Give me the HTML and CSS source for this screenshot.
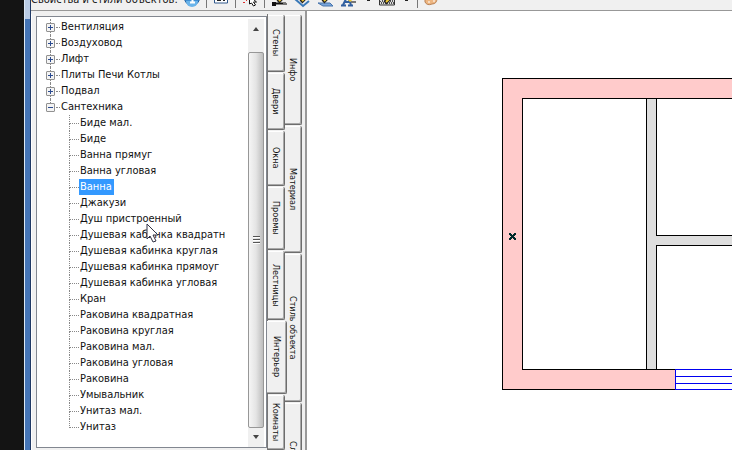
FILE: index.html
```
<!DOCTYPE html>
<html lang="ru">
<head>
<meta charset="utf-8">
<title>Свойства и стили объектов</title>
<link rel="stylesheet" href="styles.css">
</head>
<body>
<div class="desktop"></div>
<div class="frame"></div>
<div class="window">
  <header class="toolbar">
    <span class="title">Свойства и стили объектов:</span>
    <button class="tool" aria-label="Справка"><svg width="16" height="10" viewBox="0 0 16 10"><circle cx="8" cy="-2" r="7.500" fill="#3f8fd3" stroke="#24619f"/><path d="M2 1a6 6 0 0 0 12 0" fill="#6ab4ea"/><path d="M6 2.500h5M8.500 0v2" stroke="#fff" stroke-width="2"/></svg></button>
    <i class="sep"></i>
    <button class="tool" aria-label="Вид"><svg width="16" height="10" viewBox="0 0 16 10"><path d="M1.500-2v5h13v-5" fill="#fff" stroke="#31588c"/><path d="M4 .5h4M10 .5h2" stroke="#222"/></svg></button>
    <i class="sep"></i>
    <button class="tool" aria-label="Выбор"><svg width="16" height="10" viewBox="0 0 16 10"><path d="M1 2.500h2M4 .5h1" stroke="#d33"/><path d="M7.500-4v8l2-1 2 3 2-1-2-3h3z" fill="#fff" stroke="#111"/></svg></button>
    <i class="sep"></i>
    <div class="group">
      <button class="tool" aria-label="Стена"><svg width="18" height="10" viewBox="0 0 18 10"><path d="M3 3.500h12" stroke="#111" stroke-width="2"/><path d="M1 2h4v4H1z" fill="#111"/><path d="M12 4h4" stroke="#777" stroke-width="2"/><path d="M7 2l5-5" stroke="#222" stroke-width="4"/><path d="M8 1l4-4" stroke="#edc62e" stroke-width="2"/></svg></button>
      <button class="tool" aria-label="Линия"><svg width="18" height="10" viewBox="0 0 18 10"><path d="M1-1l8 7 6-5" fill="none" stroke="#3979b8" stroke-width="2"/><path d="M7 2l5-5" stroke="#222" stroke-width="4"/><path d="M8 1l4-4" stroke="#edc62e" stroke-width="2"/></svg></button>
      <button class="tool" aria-label="Плоскость"><svg width="18" height="10" viewBox="0 0 18 10"><path d="M1 3h12l3 3H6z" fill="#7ba6db" stroke="#4774ac"/><path d="M6 2l5-5" stroke="#222" stroke-width="4"/><path d="M7 1l4-4" stroke="#edc62e" stroke-width="2"/></svg></button>
      <button class="tool" aria-label="Текст"><svg width="18" height="10" viewBox="0 0 18 10"><path d="M1 5.500h5M8 5.500h5M3 5l4-8M8-3l3 8M5 2h5" fill="none" stroke="#315f9f" stroke-width="2"/><path d="M11 2h5" stroke="#777" stroke-width="2"/><path d="M9 1l4-4" stroke="#edc62e" stroke-width="3"/></svg></button>
    </div>
    <i class="more"></i>
    <button class="tool" aria-label="Штриховка"><svg width="17" height="10" viewBox="0 0 17 10"><path d="M.5-2v7h15v-7" fill="#ddd" stroke="#333"/><path d="M1 1.500h14M2 3.500h13" stroke="#555" stroke-dasharray="1 1"/><path d="M1 2.500h14M2 .5h13" stroke="#555" stroke-dasharray="1 1" stroke-dashoffset="1"/><path d="M6 3l6-6" stroke="#222" stroke-width="4"/><path d="M7 2l5-5" stroke="#edc62e" stroke-width="2"/></svg></button>
    <i class="more"></i>
    <i class="sep"></i>
    <button class="tool" aria-label="Палитра"><svg width="16" height="10" viewBox="0 0 16 10"><path d="M1-2v4q2 4 7 2q5 0 5-6" fill="#edb580" stroke="#b88155"/><path d="M4 2h2M9 1h2" stroke="#fff"/></svg></button>
  </header>
  <div class="body">
    <aside class="panel">
      <div class="content">
        <div class="treebox">
          <ul class="tree">
            <li><button class="toggle" aria-label="Развернуть"></button><span>Вентиляция</span></li>
            <li><button class="toggle" aria-label="Развернуть"></button><span>Воздуховод</span></li>
            <li><button class="toggle" aria-label="Развернуть"></button><span>Лифт</span></li>
            <li><button class="toggle" aria-label="Развернуть"></button><span>Плиты Печи Котлы</span></li>
            <li><button class="toggle" aria-label="Развернуть"></button><span>Подвал</span></li>
            <li class="open"><button class="toggle minus" aria-label="Свернуть"></button><span>Сантехника</span>
              <ul class="children">
                <li><span>Биде мал.</span></li>
                <li><span>Биде</span></li>
                <li><span>Ванна прямуг</span></li>
                <li><span>Ванна угловая</span></li>
                <li><span class="selected">Ванна</span></li>
                <li><span>Джакузи</span></li>
                <li><span>Душ пристроенный</span></li>
                <li><span>Душевая кабинка квадратн</span></li>
                <li><span>Душевая кабинка круглая</span></li>
                <li><span>Душевая кабинка прямоуг</span></li>
                <li><span>Душевая кабинка угловая</span></li>
                <li><span>Кран</span></li>
                <li><span>Раковина квадратная</span></li>
                <li><span>Раковина круглая</span></li>
                <li><span>Раковина мал.</span></li>
                <li><span>Раковина угловая</span></li>
                <li><span>Раковина</span></li>
                <li><span>Умывальник</span></li>
                <li><span>Унитаз мал.</span></li>
                <li><span>Унитаз</span></li>
              </ul>
            </li>
          </ul>
          <div class="scroll">
            <button class="arrow" aria-label="Вверх"><svg width="8" height="5" viewBox="0 0 8 5"><path d="M1 5l3-4 3 4z" fill="#444"/></svg></button>
            <div class="thumb"><i></i><i></i><i></i></div>
            <button class="arrow" aria-label="Вниз"><svg width="8" height="5" viewBox="0 0 8 5"><path d="M1 0l3 4 3-4z" fill="#444"/></svg></button>
          </div>
        </div>
      </div>
      <nav class="tabs inner">
        <button class="tab t1">Стены</button>
        <button class="tab t1">Двери</button>
        <button class="tab t2">Окна</button>
        <button class="tab t3">Проемы</button>
        <button class="tab t4">Лестницы</button>
        <button class="tab active">Интерьер</button>
        <button class="tab rest">Комнаты</button>
      </nav>
      <nav class="tabs outer">
        <button class="tab o1">Инфо</button>
        <button class="tab o2">Материал</button>
        <button class="tab o3">Стиль объекта</button>
        <button class="tab o4">Слой</button>
      </nav>
    </aside>
    <main class="plan">
      <svg width="425" height="438" viewBox="307 12 425 438" shape-rendering="crispEdges" role="img" aria-label="План">
        <path d="M740 78.500H502.500V389.500H675.500V369.500H522.500V98.500H740z" fill="#ffcbcb" stroke="#000"/>
        <path d="M646 99h11v137h80v10h-80v123h-11z" fill="#dedede"/>
        <path d="M646.500 99v270M656.500 99v136.500H740M740 245.500H656.500V369M646 369.500h30" fill="none" stroke="#000"/>
        <path d="M740 369.500H675.500V389.500H740M676 376.500h64M676 383.500h64" fill="none" stroke="#0000f0"/>
        <path d="M509 233h2v1h1v1h1v-1h1v-1h2v2h-1v1h-1v1h1v1h1v2h-2v-1h-1v-1h-1v1h-1v1h-2v-2h1v-1h1v-1h-1v-1h-1z" fill="#002b2b"/>
      </svg>
    </main>
  </div>
</div>
<svg class="cursor" width="14" height="20" viewBox="0 0 14 20"><path d="M1 1v15l3-3 3 6 3-1-3-6h5z" fill="#fff" stroke="#334"/></svg>
</body>
</html>
```
FILE: styles.css
```
* { box-sizing: border-box; }
body {
  margin: 0;
  height: 100vh;
  display: flex;
  overflow: hidden;
  background: #fff;
  color: #111;
  font: 11px/16px "DejaVu Sans Condensed", "DejaVu Sans", sans-serif;
}
button { font: inherit; color: inherit; padding: 0; border: 0; background: none; }
ul { list-style: none; margin: 0; padding: 0; }
svg { display: block; }

.desktop { flex: 0 0 24px; background: #141414; }
.frame {
  flex: 0 0 7px;
  border-left: 1px solid #dce8f4;
  border-right: 1px solid #1f3864;
  background: linear-gradient(#b9cbe4 0 19px, #4474b5 19px);
}
.window { flex: 1; min-width: 0; display: flex; flex-direction: column; }

.toolbar {
  flex: 0 0 11px;
  display: flex;
  align-items: flex-start;
  gap: 6px;
  background: #f0f0f0;
  border-bottom: 1px solid #989898;
  overflow: hidden;
}
.title { flex: 0 0 145px; margin-top: -8px; white-space: nowrap; }
.tool { flex: none; height: 10px; }
.group { display: flex; gap: 5px; }
.sep { flex: none; width: 1px; height: 8px; background: #777; }
.more { flex: none; width: 3px; height: 1px; margin: 0 3px; background: #222; }

.body { flex: 1; min-height: 0; display: flex; }
.panel {
  flex: 0 0 276px;
  display: flex;
  background: #f0f0f0;
  border-right: 2px solid #999;
  padding-top: 3px;
}
.content { flex: 1; min-width: 0; padding: 2px 0 2px 4px; border-left: 1px solid #fff; }
.treebox {
  height: 100%;
  display: flex;
  border: 1px solid #828790;
  background: #fff;
}
.tree { flex: 1; padding: 2px 0 0 9px; white-space: nowrap; min-width: 0; }
.tree > li { position: relative; padding-left: 15px; }
.tree > li::before {
  content: "";
  position: absolute;
  left: 4px;
  top: 0;
  height: 16px;
  border-left: 1px dotted #888;
}
.tree > li::after {
  content: "";
  position: absolute;
  left: 10px;
  top: 8px;
  width: 4px;
  border-top: 1px dotted #888;
}
.tree > .open::before { height: 8px; }
.toggle {
  position: absolute;
  z-index: 1;
  left: 0;
  top: 4px;
  width: 9px;
  height: 9px;
  border: 1px solid #919191;
  border-radius: 1px;
  background: linear-gradient(#2b4b90, #2b4b90) center / 5px 1px no-repeat, linear-gradient(#2b4b90, #2b4b90) center / 1px 5px no-repeat, #f4f4f4;
}
.minus { background: linear-gradient(#2b4b90, #2b4b90) center / 5px 1px no-repeat, #f4f4f4; }
.children li { position: relative; padding-left: 19px; }
.children li::before {
  content: "";
  position: absolute;
  left: 8px;
  top: 0;
  width: 9px;
  height: 8px;
  border: dotted #888;
  border-width: 0 0 1px 1px;
}
.children li:not(:last-child)::after {
  content: "";
  position: absolute;
  left: 8px;
  top: 8px;
  height: 8px;
  border-left: 1px dotted #888;
}
.selected { display: inline-block; margin-left: -1px; padding: 0 2px 0 1px; background: #3399ff; color: #fff; }

.scroll {
  flex: 0 0 16px;
  display: flex;
  flex-direction: column;
  margin: 2px 2px 0 0;
  background: #f0f0f0;
}
.arrow { flex: 0 0 19px; display: grid; place-items: center; }
.arrow:first-child { flex-basis: 33px; padding-bottom: 14px; }
.thumb {
  flex: 1;
  display: flex;
  flex-direction: column;
  align-items: center;
  justify-content: center;
  gap: 1px;
  border: 1px solid #979797;
  border-radius: 2px;
  background: linear-gradient(90deg, #f5f5f5, #e4e4e4 50%, #bdbdbd);
}
.thumb i { width: 7px; height: 2px; border-top: 1px solid #555; background: #fff; }

.tabs { display: flex; flex-direction: column; gap: 1px; min-width: 0; min-height: 0; padding-top: 1px; }
.inner { flex: 0 0 18px; border-left: 1px solid #777; }
.outer { flex: 0 0 17px; margin-right: 3px; overflow: hidden; }
.tab {
  flex: none;
  width: 100%;
  writing-mode: vertical-rl;
  display: flex;
  align-items: center;
  justify-content: center;
  white-space: nowrap;
  border: solid #6d6d6d;
  border-width: 0 1px 1px 0;
  border-radius: 0 2px 2px 0;
  box-shadow: inset 0 1px #fff, inset -1px -1px #a8a8a8;
  background: #f0f0f0;
  font-size: 9px;
}
.t1 { height: 57px; }
.t2 { height: 55px; }
.t3 { height: 63px; }
.t4 { height: 69px; }
.active { position: relative; width: 20px; height: 73px; margin-left: -1px; z-index: 1; }
.rest { flex: 1; }
.o1 { height: 110px; }
.o2 { height: 127px; }
.o3 { height: 148px; }
.o4 { height: 98px; }

.plan { flex: 1; min-width: 0; padding-top: 1px; overflow: hidden; }
.cursor { position: absolute; left: 146px; top: 223px; }
```
